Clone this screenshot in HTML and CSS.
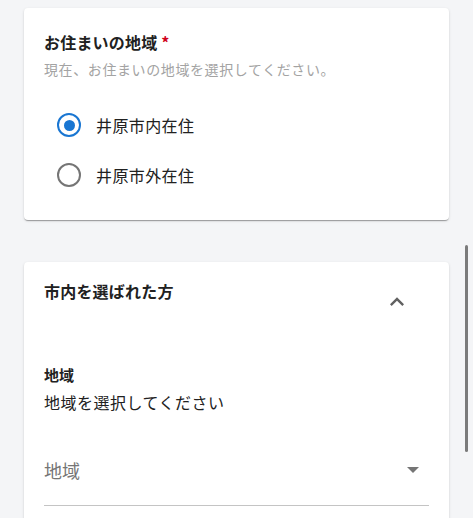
FILE: index.html
```html
<!doctype html>
<html lang="ja">
  <head>
    <meta charset="UTF-8" />
    <meta name="viewport" content="width=device-width, initial-scale=1.0" />
    <title>お住まいの地域</title>
    <link rel="stylesheet" href="styles.css">
  </head>
  <body>
    <div class="page">
      <section class="card">
        <h2 class="card-title">お住まいの地域 <span class="required">*</span></h2>
        <p class="card-help">現在、お住まいの地域を選択してください。</p>

        <div class="radio-group">
          <label class="radio-row">
            <span class="radio checked"></span>
            <span class="radio-label">井原市内在住</span>
          </label>
          <label class="radio-row">
            <span class="radio"></span>
            <span class="radio-label">井原市外在住</span>
          </label>
        </div>
      </section>

      <section class="card card-section">
        <div class="section-header">
          <h2 class="card-title section-title">市内を選ばれた方</h2>
          <button class="collapse-btn" aria-label="閉じる">
            <svg width="28" height="28" viewBox="0 0 24 24"><path d="M12 8l-6 6 1.41 1.41L12 10.83l4.59 4.58L18 14z" fill="#616161"/></svg>
          </button>
        </div>

        <h3 class="field-label">地域</h3>
        <p class="field-desc">地域を選択してください</p>

        <div class="select-field">
          <span class="select-placeholder">地域</span>
          <span class="select-arrow"></span>
        </div>
      </section>
    </div>
    <div class="scroll-thumb"></div>
  </body>
</html>
```

FILE: styles.css
```css
html, body {
  margin: 0;
  height: 100%;
  overflow: hidden;
}
body {
  font-family: "Noto Sans CJK JP", "Noto Sans", sans-serif;
  background-color: #f4f5f7;
  color: #212121;
}
.page {
  padding: 8px 24px 0;
}
.card {
  background-color: white;
  border-radius: 4px;
  padding: 24px 20px 20px;
  box-shadow: 0 2px 1px -1px rgba(0, 0, 0, 0.2), 0 1px 1px rgba(0, 0, 0, 0.14), 0 1px 3px rgba(0, 0, 0, 0.12);
  margin-bottom: 42px;
}
.card-title {
  margin: 0;
  font-size: 16px;
  font-weight: 700;
  line-height: 20px;
  letter-spacing: 0.2px;
}
.required {
  color: #d0021b;
}
.card-help {
  margin: 7px 0 0;
  font-size: 14px;
  line-height: 20px;
  letter-spacing: 0.6px;
  color: #a3a3a3;
}
.radio-group {
  margin-top: 21px;
}
.radio-row {
  display: flex;
  align-items: center;
  height: 50px;
  padding-left: 13px;
}
.radio {
  width: 20px;
  height: 20px;
  border: 2px solid #757575;
  border-radius: 50%;
  display: flex;
  align-items: center;
  justify-content: center;
  flex-shrink: 0;
}
.radio.checked {
  border-color: #1976d2;
}
.radio.checked::after {
  content: "";
  width: 11px;
  height: 11px;
  border-radius: 50%;
  background-color: #1976d2;
}
.radio-label {
  margin-left: 15px;
  font-size: 16px;
  line-height: 20px;
  letter-spacing: 0.4px;
}
.card-section {
  padding-top: 16px;
  padding-bottom: 40px;
}
.section-header {
  display: flex;
  justify-content: space-between;
  align-items: flex-start;
}
.section-title {
  margin-top: 3px;
}
.collapse-btn {
  width: 48px;
  height: 48px;
  margin-right: 8px;
  padding: 0;
  border: none;
  background: none;
  display: flex;
  align-items: center;
  justify-content: center;
  cursor: pointer;
}
.field-label {
  margin: 39px 0 0;
  font-size: 15px;
  font-weight: 700;
  line-height: 20px;
}
.field-desc {
  margin: 7px 0 0;
  font-size: 16px;
  line-height: 20px;
  letter-spacing: 0.5px;
}
.select-field {
  margin-top: 46px;
  height: 24px;
  padding-bottom: 23px;
  display: flex;
  align-items: center;
  justify-content: space-between;
  border-bottom: 1px solid #c4c4c4;
}
.select-placeholder {
  font-size: 18px;
  line-height: 24px;
  color: #757575;
}
.select-arrow {
  width: 0;
  height: 0;
  margin-right: 10px;
  border-left: 6px solid transparent;
  border-right: 6px solid transparent;
  border-top: 6px solid #757575;
}
.scroll-thumb {
  position: fixed;
  top: 245px;
  right: 5px;
  width: 3px;
  height: 207px;
  border-radius: 2px;
  background-color: #7b7b7b;
}
```
